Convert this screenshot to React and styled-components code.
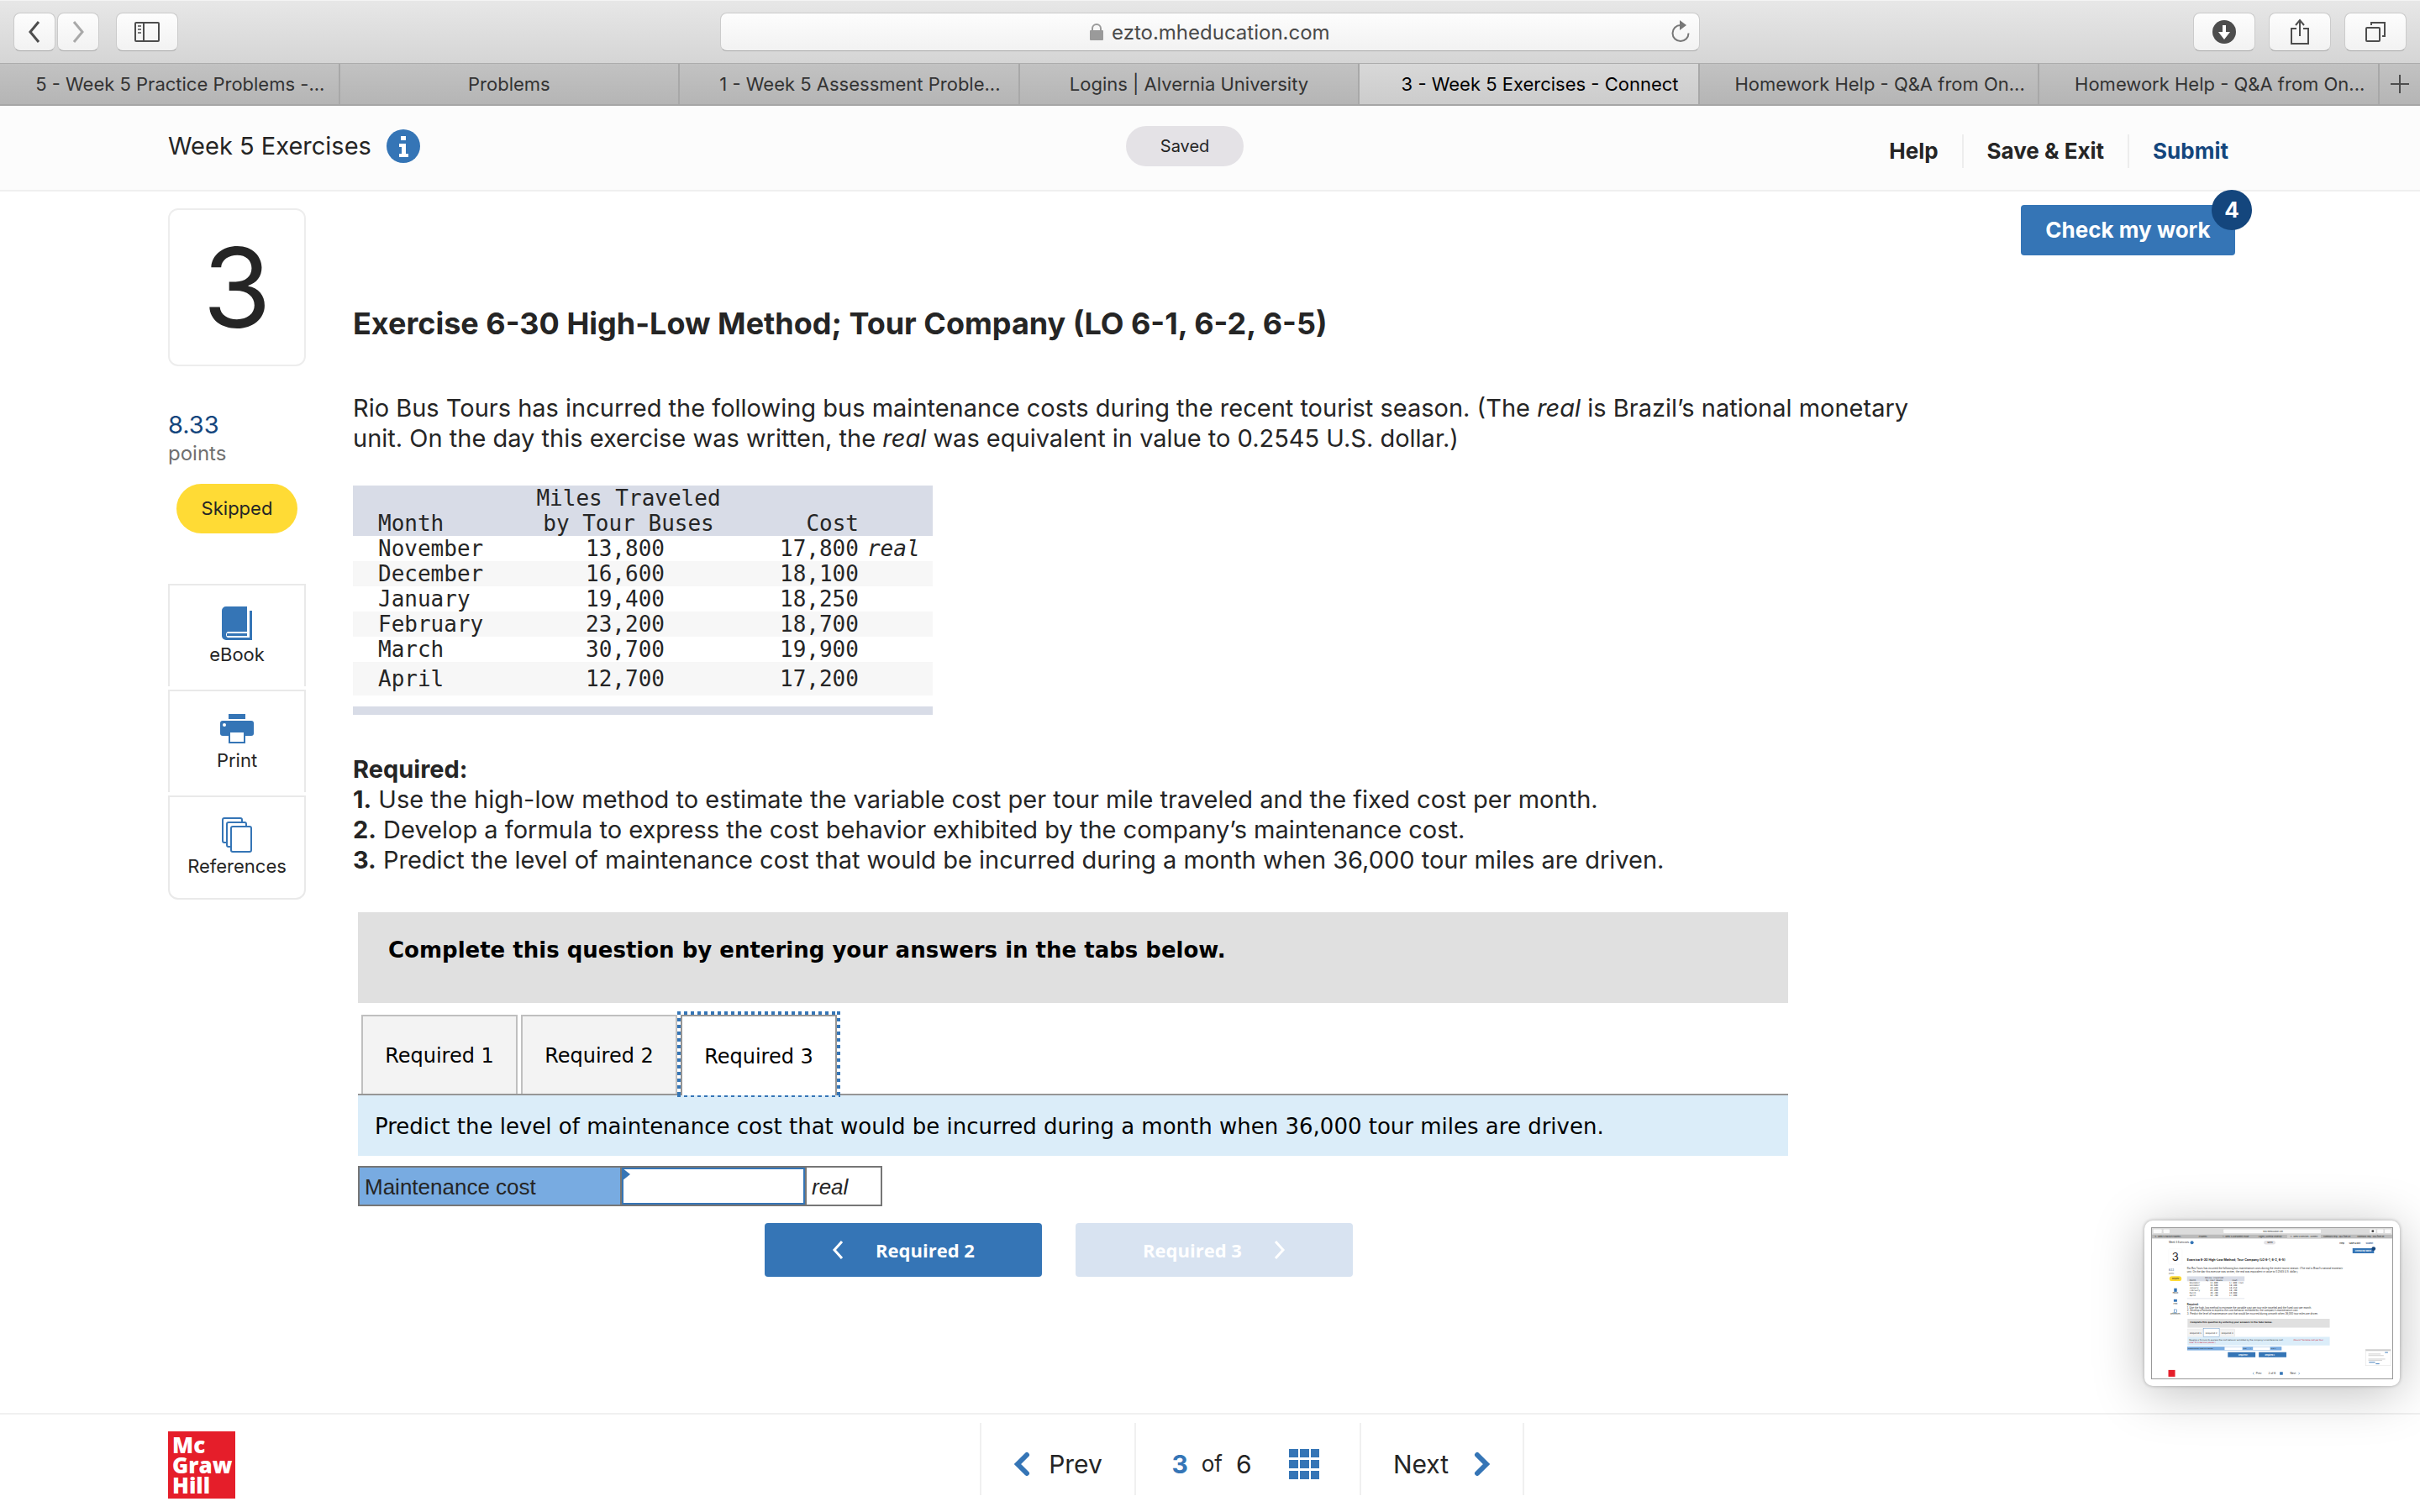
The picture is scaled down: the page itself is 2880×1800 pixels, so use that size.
// src/App.jsx
import React, { useState } from 'react';
import styled, { createGlobalStyle } from 'styled-components';

const browserTabs = [
  { title: '5 - Week 5 Practice Problems -...', cut: true },
  { title: 'Problems' },
  { title: '1 - Week 5 Assessment Proble...', cut: true },
  { title: 'Logins | Alvernia University' },
  { title: '3 - Week 5 Exercises - Connect', cut: true, active: true },
  { title: 'Homework Help - Q&A from On...', cut: true },
  { title: 'Homework Help - Q&A from On...', cut: true },
];

const costRows = [
  { month: 'November', miles: '13,800', cost: '17,800', unit: 'real' },
  { month: 'December', miles: '16,600', cost: '18,100' },
  { month: 'January', miles: '19,400', cost: '18,250' },
  { month: 'February', miles: '23,200', cost: '18,700' },
  { month: 'March', miles: '30,700', cost: '19,900' },
  { month: 'April', miles: '12,700', cost: '17,200' },
];

const answerTabs = ['Required 1', 'Required 2', 'Required 3'];

const BrowserToolbar = () => (
  <Toolbar>
    <ToolGroup>
      <ToolButton $size="small" aria-label="Back">
        <svg width="16" height="28" viewBox="0 0 16 28" fill="none" stroke="#4d4d4d" strokeWidth="3">
          <path d="M13 2 3 14l10 12" />
        </svg>
      </ToolButton>
      <ToolButton $size="small" aria-label="Forward">
        <svg width="16" height="28" viewBox="0 0 16 28" fill="none" stroke="#a9a9a9" strokeWidth="3">
          <path d="m3 2 10 12L3 26" />
        </svg>
      </ToolButton>
      <SidebarButton aria-label="Sidebar">
        <svg width="32" height="26" viewBox="0 0 32 26" fill="none" stroke="#4d4d4d" strokeWidth="2">
          <rect x="2" y="2" width="28" height="22" rx="1" />
          <path d="M12 2v22" />
          <path d="M5 6h4M5 10h4M5 14h4" stroke="#777" />
        </svg>
      </SidebarButton>
    </ToolGroup>
    <AddressBar>
      <svg width="16" height="22" viewBox="0 0 16 22">
        <path d="M3 10V7a5 5 0 0 1 10 0v3" fill="none" stroke="#9a9a9a" strokeWidth="2" />
        <rect y="9" width="16" height="12" rx="1" fill="#9a9a9a" />
      </svg>
      <AddressInput aria-label="Address" defaultValue="ezto.mheducation.com" />
      <ReloadButton aria-label="Reload">
        <svg width="26" height="28" viewBox="0 0 26 28">
          <path d="M14 6a9.500 9.500 0 1 0 9.500 9.500" fill="none" stroke="#777" strokeWidth="2" />
          <path d="M13 0v12l8-6z" fill="#777" />
        </svg>
      </ReloadButton>
    </AddressBar>
    <ToolGroup $end>
      <ToolButton aria-label="Downloads">
        <svg width="28" height="28" viewBox="0 0 28 28">
          <circle cx="14" cy="14" r="14" fill="#4d4d4d" />
          <path d="M12 6h4v8h5l-7 9-7-9h5z" fill="#fff" />
        </svg>
      </ToolButton>
      <ToolButton aria-label="Share">
        <svg width="26" height="32" viewBox="0 0 26 32" fill="none" stroke="#4d4d4d" strokeWidth="2">
          <path d="M9 12H3v18h20V12h-6M13 21V3M8 8l5-6 5 6" />
        </svg>
      </ToolButton>
      <ToolButton aria-label="Show tabs">
        <svg width="26" height="26" viewBox="0 0 26 26" fill="none" stroke="#4d4d4d" strokeWidth="2">
          <rect x="2" y="8" width="16" height="16" rx="1" />
          <path d="M8 5V2h16v16h-3" />
        </svg>
      </ToolButton>
    </ToolGroup>
  </Toolbar>
);

const BookIcon = () => (
  <svg width="36" height="40" viewBox="0 0 36 40" fill="#3575b6">
    <path d="M5 0h25v30H7a4 4 0 0 0 0 7h26V5h3v35H5a5 5 0 0 1-5-5V5a5 5 0 0 1 5-5z" />
    <path d="M6 32h24v3H6z" />
  </svg>
);

const PrintIcon = () => (
  <svg width="40" height="36" viewBox="0 0 40 36">
    <path d="M10 0h20v6H10z" fill="#3575b6" />
    <path d="M3 8h34a3 3 0 0 1 3 3v12a3 3 0 0 1-3 3H3a3 3 0 0 1-3-3V11a3 3 0 0 1 3-3z" fill="#3575b6" />
    <circle cx="5" cy="13" r="2" fill="#fff" />
    <path d="M11 21h18v13H11z" fill="#fff" stroke="#3575b6" strokeWidth="2" />
  </svg>
);

const CopiesIcon = () => (
  <svg width="36" height="42" viewBox="0 0 36 42" fill="#fff" stroke="#3575b6" strokeWidth="2">
    <rect x="1" y="1" width="23" height="29" rx="2" />
    <rect x="6" y="6" width="23" height="29" rx="2" />
    <rect x="11" y="11" width="24" height="30" rx="2" />
  </svg>
);

const tools = [
  { label: 'eBook', icon: <BookIcon /> },
  { label: 'Print', icon: <PrintIcon /> },
  { label: 'References', icon: <CopiesIcon /> },
];

// Small picture of the page that floats over the bottom right corner
const ScreenPreview = () => (
  <Preview>
    <svg width="100%" viewBox="0 0 1568 980" fontFamily="Inter, sans-serif" fill="#252525" aria-hidden="true">
      <rect width="1568" height="980" fill="#fff" />
      <rect width="1568" height="41" fill="#dcdcdc" />
      <rect x="9" y="8" width="55" height="25" rx="4" fill="#fafafa" />
      <rect x="75" y="8" width="40" height="25" rx="4" fill="#fafafa" />
      <rect x="467" y="8" width="635" height="25" rx="4" fill="#fafafa" />
      <rect x="1421" y="8" width="40" height="25" rx="4" fill="#fafafa" />
      <rect x="1470" y="8" width="40" height="25" rx="4" fill="#fafafa" />
      <rect x="1519" y="8" width="40" height="25" rx="4" fill="#fafafa" />
      <circle cx="1441" cy="20" r="8" fill="#444" />
      <rect y="41" width="1568" height="27" fill="#bbb" />
      <rect x="882" y="41" width="220" height="27" fill="#d2d2d2" />
      <g fontSize="12" textAnchor="middle">
        <text x="790" y="26">ezto.mheducation.com</text>
        {browserTabs.map((tab, i) => (
          <text key={i} x={112 + i * 220} y="59">{tab.title}</text>
        ))}
      </g>
      <text x="109" y="100" fontSize="16">Week 5 Exercises</text>
      <circle cx="261" cy="95" r="11" fill="#3575b6" />
      <rect x="730" y="82" width="76" height="25" rx="12" fill="#e4e2e6" />
      <text x="752" y="99" fontSize="12">Saved</text>
      <g fontSize="14" fontWeight="600">
        <text x="1224" y="102">Help</text>
        <text x="1286" y="102">Save &amp; Exit</text>
        <text x="1395" y="102" fill="#14467d">Submit</text>
      </g>
      <rect x="1309" y="132" width="140" height="33" rx="2" fill="#3575b6" />
      <circle cx="1446" cy="135" r="13" fill="#14467d" />
      <text x="1325" y="154" fontSize="14" fontWeight="700" fill="#fff">Check my work</text>
      <rect x="109" y="136" width="88" height="101" rx="5" fill="none" stroke="#e9e9e9" />
      <text x="130" y="212" fontSize="72">3</text>
      <text x="109" y="281" fontSize="16" fill="#14467d">8.33</text>
      <text x="109" y="299" fontSize="12" fill="#707070">points</text>
      <rect x="114" y="314" width="79" height="32" rx="16" fill="#ffdb35" />
      <text x="130" y="335" fontSize="12">Skipped</text>
      <rect x="144" y="393" width="19" height="23" fill="#3575b6" />
      <rect x="142" y="465" width="22" height="16" fill="#3575b6" />
      <rect x="145" y="532" width="16" height="18" fill="none" stroke="#3575b6" strokeWidth="3" />
      <g fontSize="12" textAnchor="middle">
        <text x="153" y="430">eBook</text>
        <text x="153" y="497">Print</text>
        <text x="153" y="566">References</text>
      </g>
      <text x="229" y="216" fontSize="20" fontWeight="700">Exercise 6-30 High-Low Method; Tour Company (LO 6-1, 6-2, 6-5)</text>
      <g fontSize="16">
        <text x="229" y="270">Rio Bus Tours has incurred the following bus maintenance costs during the recent tourist season. (The real is Brazil’s national monetary</text>
        <text x="229" y="290">unit. On the day this exercise was written, the real was equivalent in value to 0.2545 U.S. dollar.)</text>
        <text x="229" y="504" fontWeight="700">Required:</text>
        <text x="229" y="524">1. Use the high-low method to estimate the variable cost per tour mile traveled and the fixed cost per month.</text>
        <text x="229" y="543">2. Develop a formula to express the cost behavior exhibited by the company’s maintenance cost.</text>
        <text x="229" y="563">3. Predict the level of maintenance cost that would be incurred during a month when 36,000 tour miles are driven.</text>
      </g>
      <rect x="229" y="315" width="375" height="32" fill="#d8dce7" />
      <rect x="229" y="458" width="375" height="4" fill="#d8dce7" />
      <g fontSize="14" fontFamily="DejaVu Sans Mono, monospace">
        <text x="245" y="343">Month</text>
        <text x="347" y="328">Miles Traveled</text>
        <text x="352" y="343">by Tour Buses</text>
        <text x="523" y="343">Cost</text>
        {costRows.map((row, i) => (
          <React.Fragment key={row.month}>
            <text x="245" y={361 + i * 17}>{row.month}</text>
            <text x="380" y={361 + i * 17}>{row.miles}</text>
            <text x="505" y={361 + i * 17}>{row.cost} {row.unit}</text>
          </React.Fragment>
        ))}
      </g>
      <rect x="232" y="592" width="928" height="58" fill="#e0e0e0" />
      <rect x="234" y="658" width="101" height="52" fill="#f3f3f3" stroke="#ccc" />
      <rect x="441" y="658" width="101" height="52" fill="#f3f3f3" stroke="#ccc" />
      <rect x="232" y="710" width="928" height="56" fill="#dbedf9" />
      <rect x="335" y="656" width="104" height="54" fill="#fff" stroke="#3575b6" strokeWidth="2" />
      <g fontSize="14" fontFamily="DejaVu Sans, sans-serif">
        <text x="250" y="620" fontWeight="700">Complete this question by entering your answers in the tabs below.</text>
        <text x="247" y="690">Required 1</text>
        <text x="350" y="690">Required 2</text>
        <text x="454" y="690">Required 3</text>
        <text x="242" y="735" fontSize="13">Develop a formula to express the cost behavior exhibited by the company’s maintenance cost.</text>
        <text x="923" y="735" fontSize="13" fill="#c8102e">(Round &quot;Variable cost per tour</text>
        <text x="242" y="753" fontSize="13" fill="#c8102e">mile&quot; to 3 decimal places.)</text>
      </g>
      <rect x="230" y="774" width="616" height="24" fill="#78abe1" />
      <rect x="474" y="776" width="116" height="20" fill="#fff" />
      <rect x="659" y="776" width="112" height="20" fill="#fff" />
      <g fontSize="13" fontFamily="Liberation Sans, sans-serif">
        <text x="234" y="791">Maintenance cost per month =</text>
        <text x="596" y="791">real</text>
        <text x="640" y="791">+</text>
        <text x="776" y="791">real X</text>
      </g>
      <rect x="495" y="810" width="180" height="33" fill="#3575b6" />
      <rect x="697" y="810" width="180" height="33" fill="#3575b6" />
      <g fontSize="12" fontWeight="700">
        <text x="565" y="831" fill="#fff">Required 1</text>
        <text x="738" y="831" fill="#fff">Required 3</text>
      </g>
      <rect x="1394" y="792" width="164" height="106" fill="#fff" stroke="#ddd" strokeWidth="3" />
      <rect x="1394" y="792" width="164" height="10" fill="#ccc" />
      <path d="M1412 822h80M1412 832h100M1412 855h110M1412 863h90" stroke="#aaa" strokeWidth="3" />
      <path d="M1520 812h20M1416 876h40M1460 886h24" stroke="#3575b6" strokeWidth="5" />
      <rect x="107" y="926" width="44" height="44" fill="#e51e2a" />
      <g fontSize="17">
        <text x="679" y="955">Prev</text>
        <text x="760" y="955">3 of 6</text>
        <text x="902" y="955">Next</text>
      </g>
      <rect x="834" y="939" width="20" height="19" fill="#3575b6" />
      <path d="m665 942-6 7 6 7M957 942l6 7-6 7" fill="none" stroke="#3575b6" strokeWidth="3" />
    </svg>
  </Preview>
);

export default function App() {
  const [activeTab, setActiveTab] = useState('Required 3');

  return (
    <Page>
      <GlobalStyle />
      <BrowserToolbar />
      <TabStrip>
        {browserTabs.map((tab, i) => (
          <BrowserTab key={i} $active={tab.active} $cut={tab.cut}>{tab.title}</BrowserTab>
        ))}
        <NewTab aria-label="New tab">
          <svg width="22" height="22" viewBox="0 0 22 22" stroke="#4d4d4d" strokeWidth="2">
            <path d="M11 0v22M0 11h22" />
          </svg>
        </NewTab>
      </TabStrip>

      <Header>
        <AssignmentTitle>
          Week 5 Exercises
          <svg width="40" height="40" viewBox="0 0 40 40">
            <circle cx="20" cy="20" r="20" fill="#3575b6" />
            <path d="M17 8h6v5h-6zM15 17h8v12h3v4H15v-4h3v-8h-3z" fill="#fff" />
          </svg>
        </AssignmentTitle>
        <SavedBadge>Saved</SavedBadge>
        <HeaderNav>
          <HeaderLink href="#help">Help</HeaderLink>
          <HeaderLink href="#exit">Save &amp; Exit</HeaderLink>
          <HeaderLink href="#submit" $accent>Submit</HeaderLink>
        </HeaderNav>
      </Header>

      <Main>
        <Sidebar>
          <QuestionNumber>3</QuestionNumber>
          <Points>
            <strong>8.33</strong>
            points
          </Points>
          <Skipped>Skipped</Skipped>
          <ToolList>
            {tools.map((tool) => (
              <ToolCard key={tool.label}>
                <IconSlot>{tool.icon}</IconSlot>
                {tool.label}
              </ToolCard>
            ))}
          </ToolList>
        </Sidebar>

        <Content>
          <ActionRow>
            <CheckButton>
              Check my work
              <CheckCount>4</CheckCount>
            </CheckButton>
          </ActionRow>
          <Title>Exercise 6-30 High-Low Method; Tour Company (LO 6-1, 6-2, 6-5)</Title>
          <Intro>
            Rio Bus Tours has incurred the following bus maintenance costs during the recent tourist
            season. (The <em>real</em> is Brazil’s national monetary unit. On the day this exercise was
            written, the <em>real</em> was equivalent in value to 0.2545 U.S. dollar.)
          </Intro>

          <CostTable>
            <thead>
              <tr>
                <MonthHead>Month</MonthHead>
                <MilesHead>Miles Traveled<br />by Tour Buses</MilesHead>
                <CostHead>Cost</CostHead>
              </tr>
            </thead>
            <tbody>
              {costRows.map((row) => (
                <CostRow key={row.month}>
                  <MonthCell>{row.month}</MonthCell>
                  <MilesCell>{row.miles}</MilesCell>
                  <CostCell>{row.cost}{row.unit && <em>{row.unit}</em>}</CostCell>
                </CostRow>
              ))}
            </tbody>
          </CostTable>
          <TableRule />

          <Requirements>
            <b>Required:</b>
            <p><b>1.</b> Use the high-low method to estimate the variable cost per tour mile traveled and the fixed cost per month.</p>
            <p><b>2.</b> Develop a formula to express the cost behavior exhibited by the company’s maintenance cost.</p>
            <p><b>3.</b> Predict the level of maintenance cost that would be incurred during a month when 36,000 tour miles are driven.</p>
          </Requirements>

          <AnswerPanel>
            <Instruction>Complete this question by entering your answers in the tabs below.</Instruction>
            <AnswerTabs role="tablist">
              {answerTabs.map((tab) => (
                <AnswerTab
                  key={tab}
                  role="tab"
                  aria-selected={tab === activeTab}
                  $active={tab === activeTab}
                  onClick={() => setActiveTab(tab)}
                >
                  {tab}
                </AnswerTab>
              ))}
            </AnswerTabs>
            <Prompt>Predict the level of maintenance cost that would be incurred during a month when 36,000 tour miles are driven.</Prompt>
            <AnswerRow>
              <AnswerLabel htmlFor="maintenance-cost">Maintenance cost</AnswerLabel>
              <AnswerField>
                <AnswerInput id="maintenance-cost" type="text" />
                <CellMarker width="10" height="16" viewBox="0 0 10 16">
                  <path d="M0 0v16l10-8z" fill="#3575b6" />
                </CellMarker>
              </AnswerField>
              <AnswerUnit>real</AnswerUnit>
            </AnswerRow>
            <StepButtons>
              <StepButton>
                <svg width="14" height="22" viewBox="0 0 14 22" fill="none" stroke="#fff" strokeWidth="3">
                  <path d="m12 1-9 10 9 10" />
                </svg>
                Required 2
              </StepButton>
              <StepButton disabled>
                Required 3
                <svg width="14" height="22" viewBox="0 0 14 22" fill="none" stroke="#fff" strokeWidth="3">
                  <path d="m2 1 9 10-9 10" />
                </svg>
              </StepButton>
            </StepButtons>
          </AnswerPanel>
        </Content>
      </Main>

      <Footer>
        <Logo>Mc<br />Graw<br />Hill</Logo>
        <Pager>
          <PagerButton>
            <svg width="20" height="30" viewBox="0 0 20 30" fill="none" stroke="#3575b6" strokeWidth="6" strokeLinecap="round">
              <path d="M16 4 5 15l11 11" />
            </svg>
            Prev
          </PagerButton>
          <PagerStatus>
            <b>3</b>
            <small>of</small>
            6
            <svg width="36" height="36" viewBox="0 0 36 36" fill="#3575b6">
              <path d="M0 0h11v10H0zM13 0h11v10H13zM26 0h10v10H26zM0 13h11v10H0zM13 13h11v10H13zM26 13h10v10H26zM0 26h11v10H0zM13 26h11v10H13zM26 26h10v10H26z" />
            </svg>
          </PagerStatus>
          <PagerButton $next>
            Next
            <svg width="20" height="30" viewBox="0 0 20 30" fill="none" stroke="#3575b6" strokeWidth="6" strokeLinecap="round">
              <path d="m4 4 11 11L4 26" />
            </svg>
          </PagerButton>
        </Pager>
      </Footer>

      <ScreenPreview />
    </Page>
  );
}

const GlobalStyle = createGlobalStyle`
  * {
    box-sizing: border-box;
  }

  body {
    margin: 0;
    background: #fff;
    color: #252525;
    font-family: Inter, sans-serif;
    font-size: 29px;
    line-height: 36px;
  }

  button, input {
    font: inherit;
    color: inherit;
    margin: 0;
    padding: 0;
    border: 0;
    background: none;
  }

  svg {
    display: block;
    flex: none;
  }
`;

const Page = styled.div`
  display: flex;
  flex-direction: column;
  min-height: 100vh;
`;

const Toolbar = styled.div`
  display: flex;
  align-items: center;
  justify-content: space-between;
  height: 75px;
  padding: 0 16px;
  border-top: 1px solid #f4f4f4;
  background: linear-gradient(#e7e7e7, #d5d5d5);
`;

const ToolGroup = styled.div`
  display: flex;
  flex: 1;
  gap: ${({ $end }) => ($end ? '16px' : '2px')};
  justify-content: ${({ $end }) => ($end ? 'flex-end' : 'flex-start')};
`;

const ToolButton = styled.button`
  display: flex;
  align-items: center;
  justify-content: center;
  width: ${({ $size }) => ($size === 'small' ? '50px' : '74px')};
  height: 46px;
  border: 1px solid #cbcbcb;
  border-bottom-color: #a8a8a8;
  border-radius: 8px;
  background: linear-gradient(#fdfdfd, #f2f2f2);
`;

const SidebarButton = styled(ToolButton)`
  margin-left: 18px;
`;

const AddressBar = styled.div`
  display: flex;
  align-items: center;
  justify-content: center;
  gap: 10px;
  position: relative;
  width: 1166px;
  height: 46px;
  border: 1px solid #cbcbcb;
  border-bottom-color: #a8a8a8;
  border-radius: 8px;
  background: linear-gradient(#fdfdfd, #f2f2f2);
`;

const AddressInput = styled.input`
  width: 260px;
  padding-top: 2px;
  color: #4a4a4a;
  font-size: 24px;
  line-height: 32px;
`;

const ReloadButton = styled.button`
  position: absolute;
  right: 10px;
`;

const TabStrip = styled.div`
  display: grid;
  grid-template-columns: repeat(7, minmax(0, 1fr)) 48px;
  height: 51px;
  border-top: 1px solid #acacac;
  border-bottom: 2px solid #a6a6a6;
  background: linear-gradient(#c2c2c2, #b5b5b5);
`;

const BrowserTab = styled.button`
  padding-left: ${({ $cut }) => ($cut ? '26px' : '0')};
  border-right: 2px solid #a8a8a8;
  background: ${({ $active }) => ($active ? 'linear-gradient(#d8d8d8, #cccccc)' : 'none')};
  color: ${({ $active }) => ($active ? '#000' : '#333')};
  font-size: 22px;
  line-height: 48px;
  white-space: nowrap;
`;

const NewTab = styled.button`
  display: flex;
  align-items: center;
  justify-content: center;
`;

const Header = styled.header`
  display: flex;
  align-items: flex-start;
  justify-content: space-between;
  height: 102px;
  padding: 24px 200px 0;
  border-bottom: 2px solid #efefef;
  background: #fcfcfc;
`;

const AssignmentTitle = styled.div`
  display: flex;
  align-items: center;
  gap: 18px;
  width: 400px;
  height: 48px;
`;

const SavedBadge = styled.div`
  width: 140px;
  border-radius: 24px;
  background: #e4e2e6;
  font-size: 20px;
  line-height: 48px;
  text-align: center;
`;

const HeaderNav = styled.nav`
  display: flex;
  padding-top: 10px;
`;

const HeaderLink = styled.a`
  padding: 0 28px;
  border-left: 2px solid #ededed;
  color: ${({ $accent }) => ($accent ? '#14467d' : '#252525')};
  font-size: 26px;
  font-weight: 700;
  line-height: 40px;
  text-decoration: none;

  &:first-child {
    border-left: 0;
  }
`;

const Main = styled.main`
  display: flex;
  flex: 1;
  gap: 56px;
  padding: 0 220px 40px 200px;
`;

const Sidebar = styled.aside`
  display: flex;
  flex: none;
  flex-direction: column;
  width: 164px;
  padding-top: 20px;
`;

const QuestionNumber = styled.div`
  border: 2px solid #ededed;
  border-radius: 12px;
  font-size: 132px;
  line-height: 184px;
  text-align: center;
`;

const Points = styled.div`
  margin-top: 52px;
  color: #707070;
  font-size: 24px;
  line-height: 32px;

  strong {
    display: block;
    color: #14467d;
    font-size: 29px;
    font-weight: 400;
    line-height: 36px;
  }
`;

const Skipped = styled.div`
  align-self: center;
  width: 144px;
  margin-top: 20px;
  border-radius: 30px;
  background: #ffdb35;
  font-size: 22px;
  line-height: 59px;
  text-align: center;
`;

const ToolList = styled.div`
  display: flex;
  flex-direction: column;
  gap: 4px;
  margin-top: 60px;
`;

const ToolCard = styled.button`
  display: flex;
  flex-direction: column;
  align-items: center;
  height: 122px;
  padding-top: 24px;
  border: 2px solid #e9e9e9;
  border-bottom: 0;
  font-size: 22px;
  line-height: 24px;

  &:last-child {
    height: 124px;
    border-bottom: 2px solid #e9e9e9;
    border-radius: 0 0 12px 12px;
  }
`;

const IconSlot = styled.span`
  display: flex;
  align-items: center;
  height: 42px;
  margin-bottom: 4px;
`;

const Content = styled.div`
  flex: 1;
  min-width: 0;
`;

const ActionRow = styled.div`
  display: flex;
  justify-content: flex-end;
  padding-top: 16px;
`;

const CheckButton = styled.button`
  position: relative;
  width: 255px;
  border-radius: 4px;
  background: #3575b6;
  color: #fff;
  font-size: 26px;
  font-weight: 700;
  line-height: 60px;
`;

const CheckCount = styled.span`
  position: absolute;
  top: -18px;
  right: -20px;
  width: 48px;
  border-radius: 24px;
  background: #14467d;
  line-height: 48px;
`;

const Title = styled.h1`
  margin: 59px 0 61px;
  font-size: 36px;
  font-weight: 700;
  line-height: 44px;
`;

const Intro = styled.p`
  max-width: 1900px;
  margin: 0 0 38px;
`;

const CostTable = styled.table`
  width: 690px;
  border-collapse: collapse;
  font-family: 'DejaVu Sans Mono', monospace;
  font-size: 26px;
  line-height: 30px;

  th, td {
    padding: 0;
    font-weight: 400;
  }

  th {
    vertical-align: bottom;
    background: #d8dce7;
  }
`;

const CostRow = styled.tr`
  height: 30px;

  &:nth-child(even) {
    background: #f7f7f7;
  }

  &:last-child {
    height: 40px;
  }
`;

const MonthHead = styled.th`
  && {
    width: 206px;
    padding-left: 30px;
    text-align: left;
  }
`;

const MilesHead = styled.th`
  width: 244px;
`;

const CostHead = styled.th`
  && {
    padding-right: 88px;
    text-align: right;
  }
`;

const MonthCell = styled.td`
  && {
    padding-left: 30px;
  }
`;

const MilesCell = styled.td`
  && {
    padding-right: 8px;
    text-align: center;
  }
`;

const CostCell = styled.td`
  && {
    padding-left: 58px;
  }

  em {
    margin-left: 10px;
  }
`;

const TableRule = styled.div`
  width: 690px;
  height: 10px;
  margin: 13px 0 47px;
  background: #d8dce7;
`;

const Requirements = styled.div`
  p {
    margin: 0;
  }
`;

const AnswerPanel = styled.section`
  max-width: 1702px;
  margin: 44px 0 0 6px;
  color: #000;
  font-family: 'DejaVu Sans', sans-serif;
  font-size: 26px;
`;

const Instruction = styled.div`
  height: 108px;
  padding: 27px 36px;
  background: #e0e0e0;
  font-weight: 700;
`;

const AnswerTabs = styled.div`
  display: flex;
  gap: 4px;
  margin-top: 14px;
  padding-left: 4px;
  border-bottom: 2px solid #969696;
`;

const AnswerTab = styled.button`
  position: relative;
  width: 186px;
  height: ${({ $active }) => ($active ? '96px' : '94px')};
  margin-bottom: ${({ $active }) => ($active ? '-2px' : '0')};
  padding-top: 2px;
  border: 2px solid ${({ $active }) => ($active ? '#969696' : '#bfbfbf')};
  border-bottom: 0;
  background: ${({ $active }) => ($active ? '#fff' : '#f3f3f3')};
  font-size: 24px;

  /* square dots around the focused tab */
  &::after {
    content: ${({ $active }) => ($active ? '""' : 'none')};
    position: absolute;
    inset: -6px -6px -2px;
    background:
      repeating-linear-gradient(90deg, #3575b6 0 4px, transparent 4px 8px) top / 100% 4px no-repeat,
      repeating-linear-gradient(90deg, #3575b6 0 4px, transparent 4px 8px) bottom / 100% 2px no-repeat,
      repeating-linear-gradient(#3575b6 0 4px, transparent 4px 8px) left / 4px 100% no-repeat,
      repeating-linear-gradient(#3575b6 0 4px, transparent 4px 8px) right / 4px 100% no-repeat;
  }
`;

const Prompt = styled.div`
  padding: 2px 20px 0;
  background: #dbedf9;
  line-height: 70px;
`;

const AnswerRow = styled.div`
  display: flex;
  width: 624px;
  height: 48px;
  margin-top: 12px;
  border: 2px solid #767676;
  color: #252525;
  font-family: 'Liberation Sans', sans-serif;
  line-height: 46px;
`;

const AnswerLabel = styled.label`
  width: 310px;
  padding-left: 6px;
  background: #78abe1;
`;

const AnswerField = styled.div`
  position: relative;
  flex: 1;
  border: 1px solid #767676;
  border-width: 0 2px;
`;

const AnswerInput = styled.input`
  display: block;
  width: 100%;
  height: 44px;
  padding: 0 12px;
  border: 2px solid #3575b6;
  background: #fff;
`;

const CellMarker = styled.svg`
  position: absolute;
  top: 0;
  left: 0;
`;

const AnswerUnit = styled.em`
  width: 88px;
  padding-left: 6px;
`;

const StepButtons = styled.div`
  display: flex;
  justify-content: center;
  gap: 40px;
  padding: 20px 34px 0 0;
`;

const StepButton = styled.button`
  display: flex;
  align-items: center;
  justify-content: center;
  gap: 38px;
  width: 330px;
  height: 64px;
  border-radius: 4px;
  background: ${({ disabled }) => (disabled ? '#d8e3f1' : '#3575b6')};
  color: #fff;
  font-family: 'Open Sans', sans-serif;
  font-size: 22px;
  font-weight: 700;
`;

const Footer = styled.footer`
  display: flex;
  align-items: flex-start;
  height: 118px;
  padding: 0 180px 0 200px;
  border-top: 2px solid #f0f0f0;
`;

const Logo = styled.div`
  width: 80px;
  height: 80px;
  margin-top: 20px;
  padding: 4px 5px;
  background: #e51e2a;
  color: #fff;
  font-family: 'Open Sans', sans-serif;
  font-size: 26px;
  font-weight: 800;
  line-height: 24px;
`;

const Pager = styled.nav`
  display: flex;
  height: 86px;
  margin: 10px auto 0;
  border-right: 2px solid #f0f0f0;
  font-size: 30px;
`;

const PagerButton = styled.button`
  display: flex;
  align-items: center;
  justify-content: center;
  gap: ${({ $next }) => ($next ? '30px' : '22px')};
  width: ${({ $next }) => ($next ? '194px' : '184px')};
  padding-top: 12px;
  border-left: 2px solid #f0f0f0;
`;

const PagerStatus = styled.div`
  display: flex;
  align-items: center;
  justify-content: center;
  gap: 16px;
  width: 268px;
  padding: 12px 6px 0 0;
  border-left: 2px solid #f0f0f0;

  b {
    color: #3575b6;
  }

  small {
    font-size: 26px;
  }

  svg {
    margin-left: 28px;
  }
`;

const Preview = styled.aside`
  position: fixed;
  right: 24px;
  bottom: 150px;
  width: 304px;
  padding: 8px;
  border-radius: 10px;
  background: #fff;
  box-shadow: 0 0 4px rgba(0, 0, 0, 0.3), 0 8px 60px rgba(0, 0, 0, 0.25);

  svg {
    border: 1px solid #999;
  }
`;
